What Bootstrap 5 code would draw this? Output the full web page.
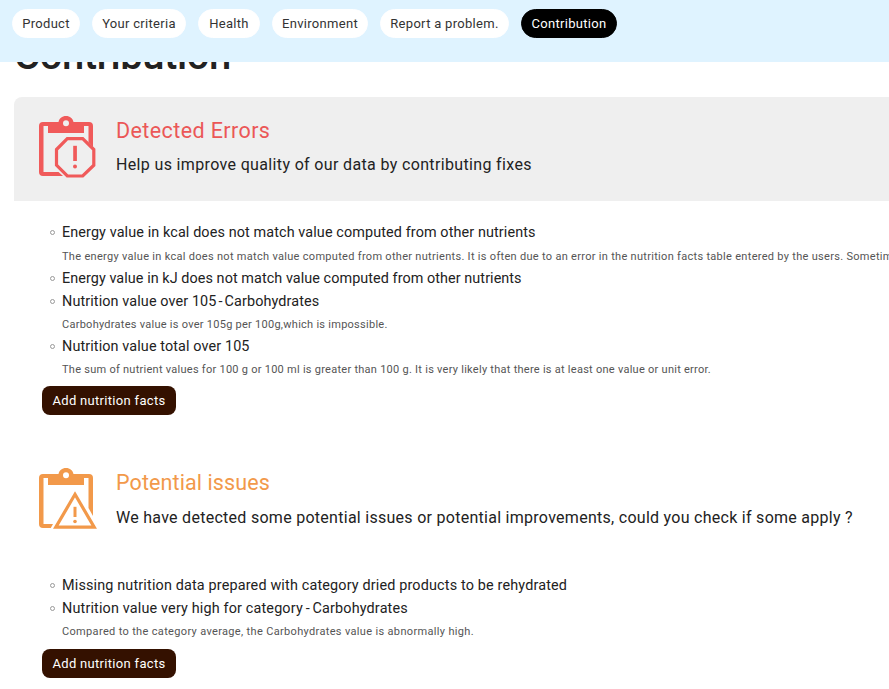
<!DOCTYPE html>
<html lang="en">
<head>
<meta charset="utf-8">
<meta name="viewport" content="width=device-width, initial-scale=1">
<title>Contribution</title>
<link href="https://cdn.jsdelivr.net/npm/bootstrap@5.3.0/dist/css/bootstrap.min.css" rel="stylesheet">
<style>
body{font-family:Roboto,"Liberation Sans",sans-serif;color:#222;font-size:16px;overflow:hidden;height:689px}
.topbar{height:62px;background:#dff3ff;padding:9px 12px;gap:12px}
.pill{height:29px;padding:0;font-size:13px;line-height:27px;background:#fff;color:#333;letter-spacing:.3px;border:1px solid #fff}
.pill.active,.pill.active:hover{background:#000;color:#fff;border-color:#000}
.w-product{width:68px}.w-criteria{width:94px}.w-health{width:62px}.w-env{width:96px}.w-report{width:129px}
.page-title{font-size:40px;line-height:48px;height:65px;padding-left:0;letter-spacing:-.42px;font-weight:500;margin:-32px 0 0}
.content{padding-left:14px}
.panel-head{height:104px;padding:17px 0 0 22px}
.panel-head.errors{background:#efefef;border-top-left-radius:8px}
.panel-icon{width:64px;height:64px;flex:none}
.panel-text{margin-left:16px;white-space:nowrap}
.panel-title{font-size:21.5px;line-height:26px;font-weight:400;margin:4px 0 0}
.errors .panel-title{color:#eb5757;letter-spacing:.4px}
.issues .panel-title{color:#f2994a;letter-spacing:.1px;margin-top:4px}
.panel-sub{line-height:20px;margin:11px 0 0}
.errors .panel-sub{letter-spacing:.35px}
.issues .panel-sub{letter-spacing:.276px;margin-top:12px}
.findings{padding-left:48px;margin:20px 0 0;white-space:nowrap}
.issues + .findings{margin-top:21px}
.findings li{position:relative}
.findings li::before{content:"";position:absolute;left:-12px;top:9px;width:5px;height:5px;border:1px solid #999;border-radius:50%}
.finding{font-size:14.4px;line-height:23px;height:23px;margin:0}
.detail{font-size:11px;line-height:22px;height:22px;padding-top:1px;margin:0;color:#555;letter-spacing:.264px}
.ls-a{letter-spacing:.108px}.ls-b{letter-spacing:.065px}.ls-c{letter-spacing:.11px}.ls-d{letter-spacing:.157px}
.dash{margin:0 2px}
.ls-d .dash{margin:0 2.5px 0 3px}
.ls-e{letter-spacing:.337px}
.gap-detail{margin-top:1px;letter-spacing:.3px}
.btn-facts,.btn-facts:hover{width:134px;height:29px;padding:0;border:0;border-radius:8px;background:#341100;color:#fff;font-size:13px;line-height:29px;letter-spacing:.31px;margin:6px 0 0 28px}
.issues-section{margin-top:34px}
.issues ~ .btn-facts{margin-top:7px}
</style>
<script src="https://cdn.jsdelivr.net/npm/bootstrap@5.3.0/dist/js/bootstrap.bundle.min.js"></script>
</head>
<body>
<nav class="topbar fixed-top d-flex align-items-start">
  <a class="btn pill rounded-pill w-product" href="#">Product</a>
  <a class="btn pill rounded-pill w-criteria" href="#">Your criteria</a>
  <a class="btn pill rounded-pill w-health" href="#">Health</a>
  <a class="btn pill rounded-pill w-env" href="#">Environment</a>
  <a class="btn pill rounded-pill w-report" href="#">Report a problem.</a>
  <a class="btn pill rounded-pill w-env active" href="#">Contribution</a>
</nav>
<main class="content pt-5">
  <div class="pt-3"><h1 class="page-title">Contribution</h1></div>
  <section>
    <div class="panel-head errors d-flex">
      <svg class="panel-icon" viewBox="0 0 64 64" fill="none">
        <path fill="#f05a5a" fill-rule="evenodd" d="M7 8h15.500c.7-3.500 3.500-6 7.500-6s6.800 2.500 7.500 6H53q4 0 4 4v21l-4.500-5V12H48v7H12v-7H7.500v46h15l4.500 4H7q-4 0-4-4V12q0-4 4-4zM33 9.200a3 3 0 1 0-6 0 3 3 0 1 0 6 0z"/>
        <path stroke="#f05a5a" stroke-width="3.200" d="M31.300 24.600h15.400L57.800 35.500v15.700L46.700 62H31.300L20.500 51.200V35.500z"/>
        <path fill="#f05a5a" d="M37.200 31.800h3.700V47h-3.700z"/><circle cx="39" cy="52.600" r="2" fill="#f05a5a"/>
      </svg>
      <div class="panel-text"><h2 class="panel-title">Detected Errors</h2><p class="panel-sub">Help us improve quality of our data by contributing fixes</p></div>
    </div>
    <ul class="findings list-unstyled">
      <li><p class="finding ls-a">Energy value in kcal does not match value computed from other nutrients</p>
        <p class="detail gap-detail">The energy value in kcal does not match value computed from other nutrients. It is often due to an error in the nutrition facts table entered by the users. Sometimes</p></li>
      <li><p class="finding ls-b">Energy value in kJ does not match value computed from other nutrients</p></li>
      <li><p class="finding ls-c">Nutrition value over 105<span class="dash">-</span>Carbohydrates</p>
        <p class="detail">Carbohydrates value is over 105g per 100g,which is impossible.</p></li>
      <li><p class="finding ls-c">Nutrition value total over 105</p>
        <p class="detail">The sum of nutrient values for 100 g or 100 ml is greater than 100 g. It is very likely that there is at least one value or unit error.</p></li>
    </ul>
    <button class="btn btn-facts" type="button">Add nutrition facts</button>
  </section>
  <section class="issues-section">
    <div class="panel-head issues d-flex">
      <svg class="panel-icon" viewBox="0 0 64 64" fill="none">
        <path fill="#f2994a" fill-rule="evenodd" d="M7 8h15.500c.7-3.500 3.500-6 7.500-6s6.800 2.500 7.500 6H53q4 0 4 4v38l-4.500-8V12H48v7H12v-7H7.500v46h9.500l-2.200 4H7q-4 0-4-4V12q0-4 4-4zM33 9.200a3 3 0 1 0-6 0 3 3 0 1 0 6 0z"/>
        <path stroke="#f2994a" stroke-width="3.200" d="M39 28.300 58.200 61.200H19.800z"/>
        <path fill="#f2994a" d="M37.500 40.800h3V51h-3z"/><circle cx="39" cy="55.500" r="1.800" fill="#f2994a"/>
      </svg>
      <div class="panel-text"><h2 class="panel-title">Potential issues</h2><p class="panel-sub">We have detected some potential issues or potential improvements, could you check if some apply ?</p></div>
    </div>
    <ul class="findings list-unstyled">
      <li><p class="finding ls-d">Missing nutrition data prepared with category dried products to be rehydrated</p></li>
      <li><p class="finding ls-d">Nutrition value very high for category<span class="dash">-</span>Carbohydrates</p>
        <p class="detail ls-e">Compared to the category average, the Carbohydrates value is abnormally high.</p></li>
    </ul>
    <button class="btn btn-facts" type="button">Add nutrition facts</button>
  </section>
</main>
</body>
</html>
